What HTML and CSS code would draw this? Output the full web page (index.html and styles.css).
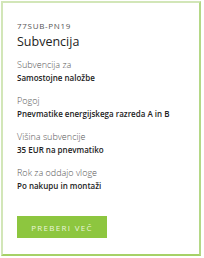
FILE: index.html
```html
<!DOCTYPE html>
<html>
<head>
<meta charset="utf-8">
<link rel="stylesheet" href="styles.css">
</head>
<body>
<div class="card">
  <div class="code">77SUB-PN19</div>
  <h2 class="title">Subvencija</h2>
  <div class="group">
    <div class="label">Subvencija za</div>
    <div class="value">Samostojne naložbe</div>
  </div>
  <div class="group">
    <div class="label">Pogoj</div>
    <div class="value">Pnevmatike energijskega razreda A in B</div>
  </div>
  <div class="group">
    <div class="label">Višina subvencije</div>
    <div class="value">35 EUR na pnevmatiko</div>
  </div>
  <div class="group">
    <div class="label">Rok za oddajo vloge</div>
    <div class="value">Po nakupu in montaži</div>
  </div>
  <a class="btn">PREBERI VEČ</a>
</div>
</body>
</html>
```
FILE: styles.css
```css
html, body {
  margin: 0;
  padding: 0;
  background: #fff;
}
body {
  font-family: "Open Sans", "Liberation Sans", sans-serif;
  color: #333;
}
.card {
  margin: 1px 0 0 1px;
  width: 200px;
  height: 255px;
  box-sizing: border-box;
  border: 2px solid #d2e6b8;
  border-right-color: #b4d886;
  border-bottom-color: #a6d166;
  padding: 17px 14px 0 14px;
  display: flex;
  flex-direction: column;
}
.code {
  font-size: 8px;
  line-height: 12px;
  letter-spacing: 0.7px;
  color: #555;
}
.title {
  margin: 1px 0 7px 0;
  font-size: 12.5px;
  line-height: 18px;
  font-weight: 400;
  color: #222;
}
.group {
  margin-bottom: 10px;
}
.label {
  font-size: 9px;
  line-height: 13px;
  font-weight: 300;
  color: #555;
}
.value {
  font-size: 8px;
  line-height: 13px;
  font-weight: 600;
  color: #222;
  white-space: nowrap;
}
.btn {
  margin-top: 14px;
  width: 90px;
  height: 22px;
  background: #8dc63f;
  color: #e9f4dc;
  font-size: 8px;
  letter-spacing: 1.3px;
  display: flex;
  align-items: center;
  justify-content: center;
}
```
